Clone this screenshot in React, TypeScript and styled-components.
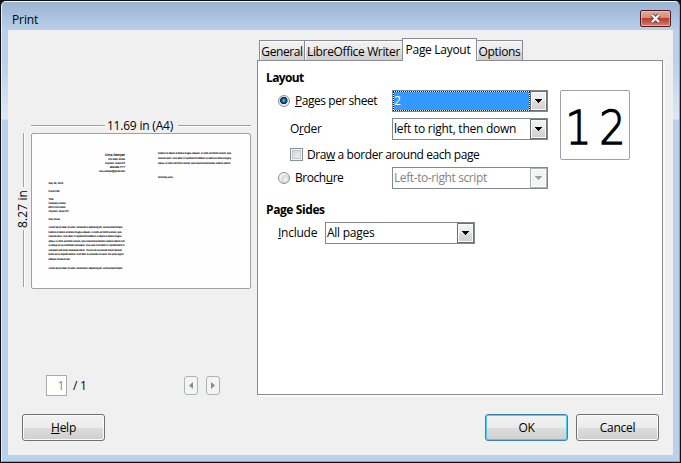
import React from 'react';
import styled, { createGlobalStyle, css } from 'styled-components';

const GlobalStyle = createGlobalStyle`
  * { box-sizing: border-box; }
  html, body, #root { margin: 0; padding: 0; }
  body {
    width: 681px;
    height: 463px;
    overflow: hidden;
    background: #000;
    font-family: "Open Sans", "Noto Sans", sans-serif;
    font-size: 12px;
    color: #000;
  }
  u { text-underline-offset: 1px; text-decoration-thickness: 1px; text-decoration-skip-ink: none; }
`;

const Window = styled.div`
  width: 681px;
  height: 463px;
  padding: 1px;
  background: #111;
`;

const Frame = styled.div`
  height: 461px;
  display: flex;
  flex-direction: column;
  border: 1px solid #3fc4dc;
  border-top-color: #f4f8fc;
  border-left-color: #e6f0fa;
  border-radius: 5px 5px 0 0;
  padding: 0 6px 6px;
  background: linear-gradient(#9ab4d2 0, #b9d1ea 29px, #b9d1ea 60px, #dde8f5 117px, #b9d1ea 118px);
`;

const TitleBar = styled.header`
  height: 28px;
  flex: none;
  display: flex;
  align-items: flex-start;
  justify-content: space-between;
  padding: 8px 2px 0 4px;
`;

const Text = styled.span<{ $ls?: number; $bold?: boolean }>`
  white-space: nowrap;
  line-height: 18px;
  letter-spacing: ${(p) => p.$ls ?? -0.25}px;
  font-weight: ${(p) => (p.$bold ? 700 : 400)};
`;

const Title = styled(Text)`
  padding-top: 1px;
  letter-spacing: -0.1px;
`;

const CloseButton = styled.button`
  width: 31px;
  height: 17px;
  padding: 0;
  display: flex;
  align-items: center;
  justify-content: center;
  border: 1px solid #4b1a22;
  border-radius: 2px;
  background: linear-gradient(#e5a99d 0, #d98a7c 45%, #bb3e2a 50%, #c55b46 75%, #d98672 100%);
  box-shadow: inset 0 0 0 1px rgba(255, 205, 195, 0.55);
`;

const Client = styled.main`
  flex: 1;
  display: flex;
  flex-direction: column;
  background: #f0f0f0;
`;

const Columns = styled.div`
  height: 366px;
  display: flex;
`;

const PreviewColumn = styled.section`
  width: 249px;
  padding: 86px 0 0 8px;
`;

const WidthRule = styled.div`
  height: 17px;
  width: 220px;
  margin-left: 15px;
  padding-top: 2px;
  display: flex;
  align-items: center;
  justify-content: space-between;
`;

const HLine = styled.i<{ $w: number }>`
  width: ${(p) => p.$w}px;
  height: 2px;
  border-top: 1px solid #a0a0a0;
  background: #fff;
`;

const VLine = styled.i<{ $h: number }>`
  height: ${(p) => p.$h}px;
  width: 2px;
  border-left: 1px solid #a0a0a0;
  background: #fff;
`;

const SizeText = styled(Text)`
  margin-right: 3px;
`;

const PreviewRow = styled.div`
  display: flex;
  height: 156px;
`;

const HeightRule = styled.div`
  width: 15px;
  display: flex;
  flex-direction: column;
  align-items: center;
  justify-content: space-between;
  padding-bottom: 2px;
`;

const VerticalText = styled.span`
  writing-mode: vertical-rl;
  transform: rotate(180deg);
  margin-right: 2px;
  line-height: 15px;
  letter-spacing: 0.1px;
  white-space: nowrap;
`;

const Sheet = styled.div`
  width: 220px;
  height: 156px;
  border: 1px solid #a0a0a0;
  border-radius: 2px;
  background: #fefefe;
  svg { display: block; }
`;

const Pager = styled.div`
  display: flex;
  align-items: center;
  height: 21px;
  margin: 86px 0 0 30px;
`;

const PageField = styled.div`
  width: 21px;
  height: 21px;
  margin-right: 6px;
  padding-right: 2px;
  display: flex;
  align-items: center;
  justify-content: flex-end;
  border: 1px solid #a5acb2;
  background: #fff;
  color: #6d8d84;
`;

const PageCount = styled.div`
  width: 111px;
  display: flex;
`;

const ArrowButton = styled.button`
  width: 14px;
  height: 19px;
  margin-right: 8px;
  padding: 0;
  display: flex;
  align-items: center;
  justify-content: center;
  border: 1px solid #adb2b5;
  border-radius: 3px;
  background: #f4f4f4;
`;

const TabColumn = styled.section`
  width: 408px;
  padding-top: 8px;
`;

const TabStrip = styled.nav`
  height: 22px;
  display: flex;
  align-items: flex-end;
  padding-left: 2px;
`;

const Tab = styled.div<{ $w: number; $active?: boolean }>`
  width: ${(p) => p.$w}px;
  height: 20px;
  padding-top: 2px;
  display: flex;
  align-items: center;
  justify-content: center;
  border: 1px solid #898c95;
  border-bottom: 0;
  background: linear-gradient(#f2f2f2 0, #ebebeb 50%, #dddddd 50%, #cfcfcf 100%);
  box-shadow: inset 1px 1px 0 #fafafa;
  & + & { margin-left: -1px; }
  ${(p) =>
    p.$active &&
    css`
      height: 23px;
      margin-bottom: -1px;
      padding: 0 3px 1px 0;
      background: #fff;
      box-shadow: none;
      z-index: 1;
    `}
`;

const Panel = styled.div`
  width: 406px;
  height: 335px;
  display: flex;
  gap: 12px;
  padding: 7px 0 0 8px;
  border: 1px solid #898c95;
  background: #fff;
  box-shadow: 2px 2px 0 #fafafa;
`;

const Options = styled.div`
  width: 282px;
`;

const Line = styled.div<{ $h?: number; $top?: number; $indent?: number }>`
  height: ${(p) => p.$h ?? 22}px;
  margin-top: ${(p) => p.$top ?? 0}px;
  padding-left: ${(p) => p.$indent ?? 0}px;
  display: flex;
  align-items: center;
`;

const Label = styled.label<{ $w?: number }>`
  width: ${(p) => (p.$w ? `${p.$w}px` : 'auto')};
  display: flex;
  align-items: center;
`;

const Radio = styled.i<{ $on?: boolean }>`
  width: 12px;
  height: 12px;
  margin-right: 5px;
  border: 1px solid #8e8f8f;
  border-radius: 50%;
  background: ${(p) =>
    p.$on
      ? 'radial-gradient(circle at 48% 45%, #6fd0f5 0, #1b78a8 1.6px, #0c2f4c 3px, #12354f 3.5px, #e8eaec 4px)'
      : 'radial-gradient(circle at 65% 65%, #f4f5f6 0, #d3d6da 4px, #f2f2f2 5px)'};
`;

const Check = styled.i`
  width: 13px;
  height: 13px;
  margin-right: 4px;
  border: 1px solid #8e8f8f;
  box-shadow: inset 0 0 0 1px #f4f4f4, inset 0 0 0 2px #c3c7cb;
  background: linear-gradient(135deg, #cbcfd5, #f6f6f6);
`;

const Combo = styled.div<{ $w: number; $disabled?: boolean }>`
  width: ${(p) => p.$w}px;
  height: 22px;
  display: flex;
  border: 1px solid #828790;
  background: #fff;
  color: ${(p) => (p.$disabled ? '#838383' : '#000')};
`;

const ComboValue = styled.div<{ $selected?: boolean }>`
  flex: 1;
  display: flex;
  align-items: center;
  padding-left: 1px;
  ${(p) =>
    p.$selected &&
    css`
      padding-left: 0;
      border: 1px dotted #111;
      background: #3399ff;
      background-clip: padding-box;
      color: #fff;
    `}
`;

const ComboArrow = styled.div<{ $disabled?: boolean }>`
  width: 17px;
  display: flex;
  align-items: center;
  justify-content: center;
  border: 1px solid ${(p) => (p.$disabled ? '#adb2b5' : '#707070')};
  background: ${(p) =>
    p.$disabled ? '#f4f4f4' : 'linear-gradient(#f2f2f2 0, #ebebeb 50%, #dddddd 50%, #cfcfcf 100%)'};
  box-shadow: inset 0 0 0 1px #fafafa;
`;

const PagesThumb = styled.div`
  width: 70px;
  height: 70px;
  margin-top: 22px;
  padding-top: 5px;
  border: 1px solid #a0a0a0;
  border-radius: 2px;
  display: flex;
  align-items: center;
  justify-content: center;
  gap: 11px;
  font-size: 47px;
  line-height: 63px;
`;

const Digit = styled.span`
  font-family: "DejaVu Sans Light", "DejaVu Sans ExtraLight", "Noto Sans", sans-serif;
  width: 23px;
  display: flex;
  justify-content: center;
  transform: scaleX(0.88);
  -webkit-text-stroke: 1.3px #000;
`;

const Footer = styled.footer`
  flex: 1;
  display: flex;
  align-items: flex-start;
  padding: 18px 14px 0;
`;

const Button = styled.button<{ $primary?: boolean }>`
  width: 83px;
  height: 27px;
  margin-right: 8px;
  padding: 0;
  font: inherit;
  color: inherit;
  border: 1px solid ${(p) => (p.$primary ? '#3c7fb1' : '#707070')};
  border-radius: 3px;
  background: linear-gradient(#f2f2f2 0, #ebebeb 50%, #dddddd 50%, #cfcfcf 100%);
  box-shadow: inset 0 0 0 1px ${(p) => (p.$primary ? '#48d1f5' : '#fbfbfb')};
  &:first-child { margin-right: 380px; }
  &:last-child { margin-right: 0; }
`;

const Triangle = ({ color = '#000' }: { color?: string }) => (
  <svg width="9" height="5" viewBox="0 0 9 5" shapeRendering="crispEdges">
    <path d="M1 0H8V1H7V2H6V3H5V4H4V3H3V2H2V1H1Z" fill={color} />
  </svg>
);

const Select = ({ w, value, ls, selected, disabled }: {
  w: number; value: string; ls?: number; selected?: boolean; disabled?: boolean;
}) => (
  <Combo $w={w} $disabled={disabled}>
    <ComboValue $selected={selected}><Text $ls={ls}>{value}</Text></ComboValue>
    <ComboArrow $disabled={disabled}><Triangle color={disabled ? '#a0a0a0' : '#000'} /></ComboArrow>
  </Combo>
);

type DocLine = [y: number, text: string, width: number];

const sender: DocLine[] = [
  [25.7, '123 Main Street', 17],
  [29.7, 'Anytown, State ZIP', 20],
  [33.7, '555-555-7777', 15],
  [38, 'urna.semper@gmail.com', 26],
];

const letter: DocLine[] = [
  [50, 'May 25, 2015', 14.5],
  [58, 'Envoi Edit', 11],
  [66, 'Title', 5],
  [70, 'Company Name', 17],
  [74, '9876 First Street', 17],
  [78, 'Anytown, State ZIP', 20],
  [86, 'Dear Bruce,', 12],
  [94, 'Lorem ipsum dolor sit amet, consectetur adipiscing elit, set eiusmod tempor', 74],
  [98.6, 'incidunt et labore et dolore magna aliquam. Ut enim ad minim veniam, quis', 73],
  [103, 'nostrud exerc. Irure dolor in reprehend incididunt ut labore et dolore magna', 73],
  [107.7, 'aliqua. Ut enim ad minim veniam, quis nostrud exercitation ullamco laboris nisi', 76],
  [112.3, 'ut aliquip ex ea commodo consequat. Duis aute irure dolor in reprehenderit in', 76],
  [116.8, 'voluptate velit esse molestaie cillum. Tia non ob ea soluad incom dereud', 73],
  [121.3, 'facilis est er expedit distinct. Nam liber te conscient to factor tum poen legum', 75],
  [125.8, 'odioque civiuda et tam.', 22],
  [135.2, 'Lorem ipsum dolor sit amet, consectetur adipiscing elit, set eiusmod tempor', 74],
];

const secondPage: DocLine[] = [
  [20.3, 'incidunt et labore et dolore magna aliquam. Ut enim ad minim veniam, quis', 73],
  [25, 'nostrud exerc. Irure dolor in reprehend incididunt ut labore et dolore magna', 73],
  [29.6, 'aliqua. Ut enim ad minim veniam, quis nostrud exercitation ullamco laboris.', 73],
  [43.5, 'Sincerely yours,', 15.5],
];

const DocLines = ({ lines, x, end }: { lines: DocLine[]; x: number; end?: boolean }) => (
  <>
    {lines.map(([y, text, width]) => (
      <text key={y} x={end ? x - width : x} y={y} textLength={width} lengthAdjust="spacingAndGlyphs">{text}</text>
    ))}
  </>
);

const LetterPreview = () => (
  <svg
    width="218" height="154" viewBox="0 0 218 154"
    fontFamily="Liberation Sans, sans-serif" fontSize="2.6" fill="#111" stroke="#111" strokeWidth="0.12"
    textRendering="geometricPrecision"
  >
    <text x="73" y="21.6" fontSize="3.5" fill="#000" textLength="20" lengthAdjust="spacingAndGlyphs">Urna Semper</text>
    <DocLines lines={sender} x={93} end />
    <DocLines lines={letter} x={16.5} />
    <DocLines lines={secondPage} x={126} />
  </svg>
);

export default function App() {
  return (
    <>
      <GlobalStyle />
      <Window>
        <Frame>
          <TitleBar>
            <Title>Print</Title>
            <CloseButton aria-label="Close">
              <svg width="13" height="11" viewBox="0 0 13 11">
                <path d="M3 2L10 9M10 2L3 9" stroke="#5b4450" strokeWidth="4.2" />
                <path d="M3 2L10 9M10 2L3 9" stroke="#f4f4f4" strokeWidth="2.4" />
              </svg>
            </CloseButton>
          </TitleBar>
          <Client>
            <Columns>
              <PreviewColumn>
                <WidthRule>
                  <HLine $w={74} />
                  <SizeText $ls={-0.2}>11.69 in (A4)</SizeText>
                  <HLine $w={73} />
                </WidthRule>
                <PreviewRow>
                  <HeightRule>
                    <VLine $h={54} />
                    <VerticalText>8.27 in</VerticalText>
                    <VLine $h={57} />
                  </HeightRule>
                  <Sheet><LetterPreview /></Sheet>
                </PreviewRow>
                <Pager>
                  <PageField><Text>1</Text></PageField>
                  <PageCount><Text>/ 1</Text></PageCount>
                  <ArrowButton aria-label="Previous page">
                    <svg width="4" height="7" viewBox="0 0 4 7"><path d="M4 0V7L0 3.5Z" fill="#8c8c8c" /></svg>
                  </ArrowButton>
                  <ArrowButton aria-label="Next page">
                    <svg width="4" height="7" viewBox="0 0 4 7"><path d="M0 0V7L4 3.5Z" fill="#8c8c8c" /></svg>
                  </ArrowButton>
                </Pager>
              </PreviewColumn>
              <TabColumn>
                <TabStrip>
                  <Tab $w={46}><Text $ls={-0.4}>General</Text></Tab>
                  <Tab $w={99}><Text $ls={-0.35}>LibreOffice Writer</Text></Tab>
                  <Tab $w={75} $active><Text $ls={-0.3}>Page Layout</Text></Tab>
                  <Tab $w={47}><Text $ls={-0.35}>Options</Text></Tab>
                </TabStrip>
                <Panel>
                  <Options>
                    <Line $h={20}><Text $bold $ls={-0.65}>Layout</Text></Line>
                    <Line $top={2} $indent={12}>
                      <Label $w={114}><Radio $on /><Text $ls={-0.45}><u>P</u>ages per sheet</Text></Label>
                      <Select w={156} value="2" selected />
                    </Line>
                    <Line $top={6} $indent={24}>
                      <Label $w={102}><Text $ls={-0.35}>O<u>r</u>der</Text></Label>
                      <Select w={156} value="left to right, then down" />
                    </Line>
                    <Line $top={5} $h={19} $indent={24}>
                      <Label><Check /><Text $ls={-0.42}>Dra<u>w</u> a border around each page</Text></Label>
                    </Line>
                    <Line $top={3} $indent={12}>
                      <Label $w={114}><Radio /><Text $ls={-0.45}>Broch<u>u</u>re</Text></Label>
                      <Select w={156} value="Left-to-right script" ls={-0.4} disabled />
                    </Line>
                    <Line $top={11} $h={20}><Text $bold $ls={-0.4}>Page Sides</Text></Line>
                    <Line $top={2} $indent={12}>
                      <Label $w={47}><Text><u>I</u>nclude</Text></Label>
                      <Select w={150} value="All pages" />
                    </Line>
                  </Options>
                  <PagesThumb><Digit>1</Digit><Digit>2</Digit></PagesThumb>
                </Panel>
              </TabColumn>
            </Columns>
            <Footer>
              <Button><Text><u>H</u>elp</Text></Button>
              <Button $primary><Text>OK</Text></Button>
              <Button><Text>Cancel</Text></Button>
            </Footer>
          </Client>
        </Frame>
      </Window>
    </>
  );
}
